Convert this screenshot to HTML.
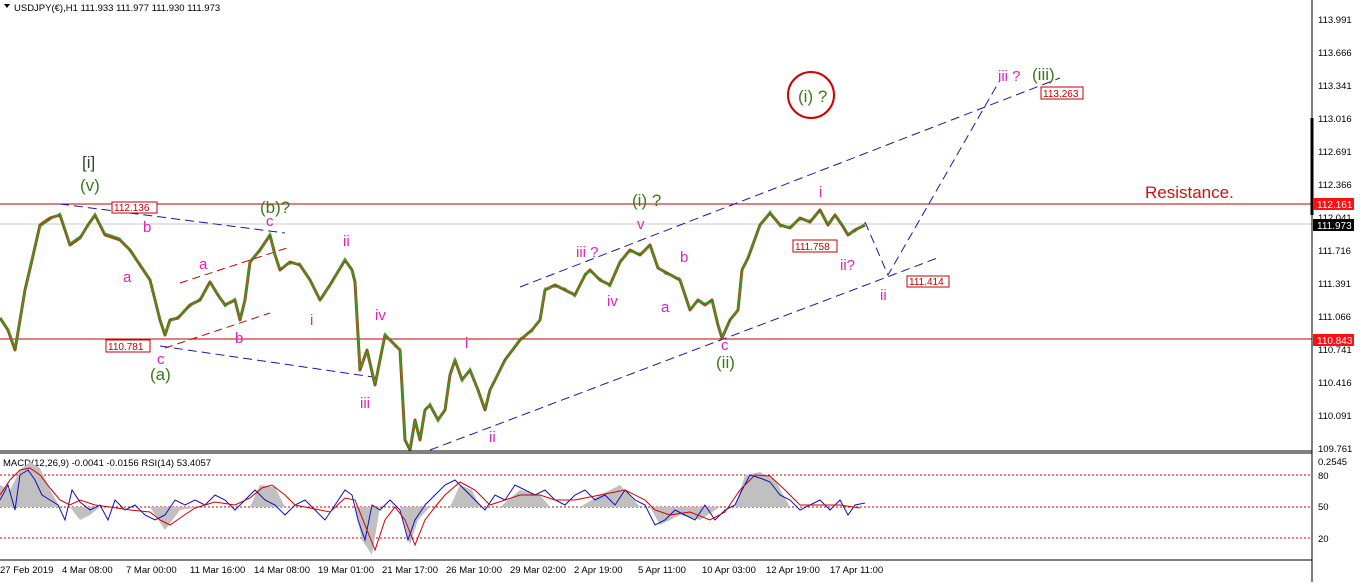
<!DOCTYPE html>
<html><head><meta charset="utf-8"><style>
body{margin:0;width:1360px;height:582px;background:#fff;overflow:hidden;font-family:"Liberation Sans",sans-serif}
svg text{font-family:"Liberation Sans",sans-serif}
</style></head><body>
<svg width="1360" height="582" xmlns="http://www.w3.org/2000/svg">
<rect width="1360" height="582" fill="#fff"/>
<!-- header -->
<polygon points="4,4 10,4 7,8" fill="#000"/>
<text x="14" y="11" font-size="9.5" fill="#000">USDJPY(€),H1  111.933 111.977 111.930 111.973</text>
<!-- horizontal lines -->
<line x1="0" y1="204" x2="1312" y2="204" stroke="#c00000" stroke-width="1"/>
<line x1="0" y1="224" x2="1312" y2="224" stroke="#c8c8c8" stroke-width="1"/>
<line x1="0" y1="339" x2="1312" y2="339" stroke="#c00000" stroke-width="1"/>
<!-- blue dashed lines -->
<g stroke="#1a1aa0" stroke-width="1" stroke-dasharray="9,5" fill="none">
<line x1="60" y1="204" x2="285" y2="233"/>
<line x1="160" y1="346" x2="380" y2="378"/>
<line x1="430" y1="450" x2="940" y2="257"/>
<line x1="520" y1="287" x2="1060" y2="78"/>
<polyline points="865,222 888,275 1000,80"/>
</g>
<g stroke="#c00000" stroke-width="1" stroke-dasharray="8,5" fill="none">
<line x1="180" y1="283" x2="290" y2="247"/>
<line x1="165" y1="348" x2="270" y2="313"/>
</g>
<!-- price path -->
<polyline fill="none" stroke="#8b5a1a" stroke-width="3" stroke-linejoin="round" points="0,318 8,330 15,350 20,320 25,290 32,260 40,225 50,218 60,215 70,245 80,238 88,225 95,215 105,235 120,240 130,250 140,265 150,280 155,300 160,320 165,335 170,320 178,318 190,305 200,300 210,282 218,295 225,305 235,300 240,320 245,300 250,262 260,250 270,235 275,255 280,270 290,262 300,265 310,280 320,300 330,285 345,260 352,270 355,282 360,370 367,350 375,385 380,360 385,335 395,345 400,350 405,440 410,450 415,420 420,440 425,410 430,405 438,420 445,410 450,375 455,360 462,380 470,370 478,390 485,410 490,390 495,380 505,360 520,340 532,330 540,320 545,290 555,285 565,290 575,295 585,275 590,270 600,280 610,285 620,262 630,250 640,255 650,245 658,268 665,272 680,280 685,295 690,310 698,300 705,305 712,300 718,325 722,338 730,320 738,310 742,270 748,258 760,225 770,213 780,225 790,228 800,218 810,222 820,210 828,225 835,215 842,225 848,235 855,230 865,225"/>
<polyline fill="none" stroke="#2aa82a" stroke-width="1" points="0,320 8,328 15,348 20,318 25,292 32,258 40,227 50,220 60,213 70,243 80,236 88,227 95,213 105,233 120,238 130,252 140,263 150,282 155,302 160,318 165,333 170,322 178,316 190,307 200,298 210,284 218,293 225,307 235,298 240,318 245,302 250,260 260,252 270,233 275,257 280,268 290,264 300,263 310,282 320,298 330,287 345,258 352,272 355,280 360,368 367,352 375,383 380,362 385,333 395,347 400,348 405,438 410,448 415,422 420,438 425,412 430,403 438,422 445,408 450,377 455,358 462,382 470,368 478,392 485,408 490,392 495,378 505,362 520,338 532,332 540,318 545,288 555,287 565,288 575,297 585,273 590,272 600,278 610,287 620,260 630,252 640,253 650,247 658,266 665,274 680,278 685,297 690,308 698,302 705,303 712,302 718,323 722,336 730,322 738,308 742,272 748,256 760,227 770,211 780,227 790,226 800,220 810,220 820,212 828,223 835,217 842,223 848,233 855,232 865,223"/>
<!-- price label boxes -->
<g font-size="10" fill="#c00000">
<rect x="112" y="202" width="45" height="11" fill="#fff" stroke="#c00000"/><text x="114" y="211">112.136</text>
<rect x="106" y="340" width="44" height="12" fill="#fff" stroke="#c00000"/><text x="108" y="350">110.781</text>
<rect x="793" y="240" width="44" height="12" fill="#fff" stroke="#c00000"/><text x="795" y="250">111.758</text>
<rect x="907" y="276" width="42" height="11" fill="#fff" stroke="#c00000"/><text x="909" y="285">111.414</text>
<rect x="1041" y="87" width="42" height="12" fill="#fff" stroke="#c00000"/><text x="1043" y="97">113.263</text>
</g>
<!-- labels -->
<g font-size="17">
<text x="82" y="168" fill="#2e4a2e">[i]</text>
<text x="80" y="191" fill="#3a7a1a">(v)</text>
<text x="260" y="213" fill="#3a7a1a">(b)?</text>
<text x="150" y="380" fill="#3a7a1a">(a)</text>
<text x="632" y="206" fill="#3a7a1a">(i) ?</text>
<text x="716" y="368" fill="#3a7a1a">(ii)</text>
<text x="798" y="102" fill="#3a7a1a">(i) ?</text>
<text x="1032" y="80" fill="#3a7a1a">(iii)</text>
</g>
<circle cx="811" cy="95" r="23" fill="none" stroke="#d00000" stroke-width="2"/>
<g font-size="15" fill="#e020c0">
<text x="143" y="232">b</text><text x="123" y="282">a</text><text x="157" y="364">c</text>
<text x="199" y="269">a</text><text x="235" y="343">b</text><text x="266" y="226">c</text>
<text x="343" y="246">ii</text><text x="310" y="325">i</text><text x="375" y="320">iv</text><text x="360" y="408">iii</text>
<text x="465" y="348">i</text><text x="489" y="442">ii</text>
<text x="576" y="257">iii ?</text><text x="607" y="306">iv</text><text x="637" y="229">v</text>
<text x="680" y="262">b</text><text x="661" y="312">a</text><text x="721" y="350">c</text>
<text x="819" y="197">i</text><text x="840" y="270">ii?</text><text x="880" y="300">ii</text>
<text x="998" y="81">iii ?</text>
</g>
<text x="1145" y="198" font-size="17" fill="#d01010">Resistance.</text>
<!-- right axis -->
<line x1="1312" y1="0" x2="1312" y2="582" stroke="#000"/>
<line x1="1312" y1="118" x2="1312" y2="215" stroke="#000" stroke-width="3"/>
<g font-size="9.5" fill="#000">
<text x="1318" y="23">113.991</text><text x="1318" y="56">113.666</text><text x="1318" y="89">113.341</text>
<text x="1318" y="122">113.016</text><text x="1318" y="155">112.691</text><text x="1318" y="188">112.366</text>
<text x="1318" y="221">112.041</text><text x="1318" y="254">111.716</text><text x="1318" y="287">111.391</text>
<text x="1318" y="320">111.066</text><text x="1318" y="353">110.741</text><text x="1318" y="386">110.416</text>
<text x="1318" y="419">110.091</text><text x="1318" y="452">109.761</text>
<text x="1318" y="465">0.2545</text><text x="1318" y="479">80</text><text x="1318" y="510">50</text><text x="1318" y="542">20</text>
</g>
<rect x="1313" y="198" width="41" height="12" fill="#ff1010"/><text x="1317" y="208" font-size="10" fill="#fff">112.161</text>
<rect x="1313" y="219" width="41" height="12" fill="#000"/><text x="1317" y="229" font-size="10" fill="#fff">111.973</text>
<rect x="1313" y="334" width="41" height="12" fill="#ff1010"/><text x="1317" y="344" font-size="10" fill="#fff">110.843</text>
<!-- panel separator -->
<line x1="0" y1="451" x2="1312" y2="451" stroke="#000"/>
<line x1="0" y1="453" x2="1312" y2="453" stroke="#000"/>
<text x="3" y="466" font-size="9.5" fill="#000">MACD(12,26,9) -0.0041 -0.0156  RSI(14) 53.4057</text>
<g stroke="#c00000" stroke-dasharray="2,2"><line x1="0" y1="475" x2="1312" y2="475"/><line x1="0" y1="507" x2="1312" y2="507"/><line x1="0" y1="538" x2="1312" y2="538"/></g>
<!-- macd histogram -->
<polygon fill="#c0c0c0" points="0,507 0,485 10,490 20,470 30,462 40,468 50,490 60,507 70,507 80,520 90,515 100,507 150,507 165,530 180,510 200,507 250,507 260,485 275,487 285,507 300,507 330,507 335,507 355,507 362,540 372,555 380,507 400,507 410,545 418,520 430,507 450,507 460,485 472,490 480,507 500,507 520,490 540,495 550,507 580,507 600,495 620,485 640,507 650,507 660,525 680,515 700,520 720,507 735,507 745,475 760,472 775,480 790,507 800,507 850,507 850,507"/>
<!-- rsi blue -->
<polyline fill="none" stroke="#1010c0" stroke-width="1" points="0,500 8,485 15,510 20,475 28,470 35,480 42,495 50,500 58,505 65,520 72,490 80,502 90,510 100,505 108,520 115,500 125,510 135,505 145,515 155,520 165,515 175,500 185,505 195,500 205,505 215,495 225,500 235,510 245,500 255,490 265,500 275,505 285,515 295,505 305,500 315,510 325,520 335,505 345,490 352,495 358,520 365,540 372,505 380,510 390,500 400,510 408,540 415,520 425,505 435,495 445,485 455,480 465,490 475,500 485,510 495,495 505,500 515,485 525,490 535,495 545,490 555,500 565,505 575,495 585,490 595,500 605,495 615,505 625,490 635,500 645,505 655,525 665,520 675,510 685,515 695,520 705,505 715,520 725,510 735,505 742,490 750,475 760,478 770,482 780,495 790,500 800,510 810,505 820,500 830,510 840,500 848,515 855,505 865,503"/>
<!-- signal red -->
<polyline fill="none" stroke="#d00000" stroke-width="1" points="0,495 10,480 20,470 30,468 40,475 50,488 60,500 70,505 80,500 95,505 110,507 130,510 150,512 160,520 170,525 180,518 195,508 215,502 235,505 250,498 262,488 272,485 285,495 295,505 310,508 330,512 345,498 355,500 365,525 375,550 385,520 395,507 405,520 415,545 425,520 435,507 445,495 460,482 475,490 490,505 505,500 520,495 540,495 555,500 575,500 600,495 625,490 645,500 655,510 670,515 690,512 710,520 725,512 740,490 755,475 770,476 785,490 800,505 820,505 840,505 860,508"/>
<!-- bottom axis -->
<line x1="0" y1="560" x2="1312" y2="560" stroke="#000"/>
<g font-size="9.5" fill="#000">
<text x="0" y="573">27 Feb 2019</text><text x="62" y="573">4 Mar 08:00</text><text x="126" y="573">7 Mar 00:00</text>
<text x="190" y="573">11 Mar 16:00</text><text x="254" y="573">14 Mar 08:00</text><text x="318" y="573">19 Mar 01:00</text>
<text x="382" y="573">21 Mar 17:00</text><text x="446" y="573">26 Mar 10:00</text><text x="510" y="573">29 Mar 02:00</text>
<text x="574" y="573">2 Apr 19:00</text><text x="638" y="573">5 Apr 11:00</text><text x="702" y="573">10 Apr 03:00</text>
<text x="766" y="573">12 Apr 19:00</text><text x="830" y="573">17 Apr 11:00</text>
</g>
</svg>
</body></html>
